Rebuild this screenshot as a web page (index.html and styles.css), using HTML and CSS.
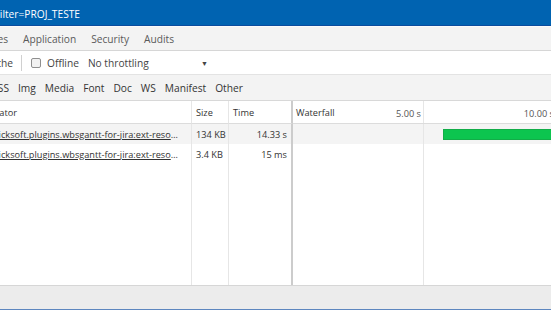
FILE: index.html
```html
<!DOCTYPE html>
<html lang="en">
<head>
  <meta charset="UTF-8">
  <meta name="viewport" content="width=device-width, initial-scale=1.0">
  <title>DevTools - Network</title>
  <link rel="stylesheet" href="styles.css">
</head>
<body>
  <div class="titlebar">
    <div class="cut title-cut"><span>Developer Tools - https://jira.local/secure/WBSGanttView.jspa?Filter=PROJ_TESTE</span></div>
  </div>

  <nav class="tabs">
    <div class="cut tabs-cut">
      <span>Elements</span><span>Console</span><span>Sources</span><span>Network</span><span>Timeline</span><span>Profiles</span>
    </div>
    <span>Application</span>
    <span>Security</span>
    <span>Audits</span>
  </nav>

  <div class="toolbar">
    <div class="cut toolbar-cut">
      <label class="check"><input type="checkbox" checked> Disable cache</label>
    </div>
    <span class="divider"></span>
    <label class="check"><input type="checkbox"> Offline</label>
    <span class="throttle">No throttling <span class="arrow">&#9660;</span></span>
  </div>

  <div class="filters">
    <div class="cut filters-cut">
      <span>All</span><span>XHR</span><span>JS</span><span>CSS</span>
    </div>
    <span>Img</span>
    <span>Media</span>
    <span>Font</span>
    <span>Doc</span>
    <span>WS</span>
    <span>Manifest</span>
    <span>Other</span>
  </div>

  <div class="table">
    <div class="cell head"><div class="cut head-cut"><span>Initiator</span></div></div>
    <div class="cell head">Size</div>
    <div class="cell head time">Time</div>
    <div class="cell head waterfall">
      <div class="seg"><span>Waterfall</span><span class="tick">5.00 s</span></div>
      <div class="seg last"><span></span><span class="tick">10.00 s</span></div>
    </div>

    <div class="cell alt initiator"><a href="#">com.ricksoft.plugins.wbsgantt-for-jira:ext-resources.js</a></div>
    <div class="cell alt">134 KB</div>
    <div class="cell alt time right">14.33 s</div>
    <div class="cell alt waterfall lines"><span class="bar" style="width: 130px"></span></div>

    <div class="cell initiator"><a href="#">com.ricksoft.plugins.wbsgantt-for-jira:ext-resources.css</a></div>
    <div class="cell">3.4 KB</div>
    <div class="cell time right">15 ms</div>
    <div class="cell waterfall lines"></div>

    <div class="cell"></div>
    <div class="cell"></div>
    <div class="cell time"></div>
    <div class="cell waterfall lines"></div>
  </div>

  <div class="statusbar"></div>
</body>
</html>
```

FILE: styles.css
```css
* {
  box-sizing: border-box;
}

body {
  margin: 0;
  width: 551px;
  height: 310px;
  overflow: hidden;
  display: flex;
  flex-direction: column;
  font-family: "Open Sans", "Segoe UI", sans-serif;
  font-size: 10.2px;
  color: #333;
  background-color: #fff;
}

/* text that runs off the left edge of the window */
.cut {
  display: flex;
  justify-content: flex-end;
  white-space: nowrap;
  flex: none;
}

.titlebar {
  flex: none;
  height: 26px;
  display: flex;
  align-items: center;
  padding-top: 2px;
  background-color: #0063b1;
  border-bottom: 1px solid #0b4c9e;
  color: #fff;
}

.title-cut {
  width: 80px;
}

.tabs {
  flex: none;
  height: 25px;
  display: flex;
  align-items: center;
  gap: 15px;
  padding-top: 1px;
  background-color: #f3f3f3;
  border-top: 1px solid #fafafa;
  border-bottom: 1px solid #d6d6d6;
  color: #5a5a5a;
}

.tabs-cut {
  width: 8px;
  gap: 15px;
}

.toolbar {
  flex: none;
  height: 24px;
  display: flex;
  align-items: center;
  padding-top: 1px;
  border-bottom: 1px solid #e3e3e3;
  color: #444;
}

.toolbar-cut {
  width: 13px;
}

.divider {
  width: 1px;
  height: 16px;
  margin: 0 9px 0 8px;
  background-color: #d0d0d0;
}

.check {
  display: flex;
  align-items: center;
  gap: 6px;
  white-space: nowrap;
}

.check input {
  appearance: none;
  width: 10px;
  height: 10px;
  margin: 0;
  border: 1px solid #8f8f8f;
  border-radius: 2px;
  background-color: #f2f2f2;
}

.throttle {
  display: flex;
  align-items: center;
  justify-content: space-between;
  width: 120px;
  margin-left: 9px;
  white-space: nowrap;
}

.arrow {
  font-size: 7px;
  color: #444;
}

.filters {
  flex: none;
  height: 26px;
  display: flex;
  align-items: center;
  gap: 9px;
  padding-top: 1px;
  background-color: #f3f3f3;
  border-bottom: 1px solid #d8d8d8;
  color: #333;
}

.filters-cut {
  width: 9px;
  gap: 9px;
}

.table {
  flex: 1;
  display: grid;
  grid-template-columns: 192px 37px 64px 1fr;
  grid-template-rows: 23px 20px 20px 1fr;
  font-size: 9.2px;
}

.cell {
  display: flex;
  align-items: center;
  padding: 0 4px;
  border-right: 1px solid #e6e6e6;
  white-space: nowrap;
  overflow: hidden;
}

.cell.head {
  border-bottom: 1px solid #dcdcdc;
}

.head-cut {
  width: 17px;
  margin-left: -4px;
}

.cell.alt {
  background-color: #f4f4f4;
}

.cell.time {
  border-right: 2px solid #cccccc;
}

.cell.right {
  justify-content: flex-end;
}

.initiator a {
  display: block;
  width: calc(100% + 26px);
  margin-left: -30px;
  overflow: hidden;
  text-overflow: ellipsis;
  color: #333;
}

.cell.waterfall {
  padding: 0;
  border-right: none;
}

.waterfall.head {
  display: grid;
  grid-template-columns: 131px 131px;
  align-items: stretch;
}

.seg {
  display: flex;
  justify-content: space-between;
  align-items: center;
  padding: 0 2px 0 3px;
  border-right: 1px solid #e6e6e6;
}

.seg.last {
  border-right: none;
  padding-right: 1px;
}

.tick {
  padding-top: 3px;
  color: #555;
}

.waterfall.lines {
  background-image: linear-gradient(#e6e6e6, #e6e6e6);
  background-size: 1px 100%;
  background-position: 130px 0;
  background-repeat: no-repeat;
}

.bar {
  height: 11px;
  margin-left: 150px;
  margin-top: 1px;
  background-color: #0cc54f;
  border: 1px solid #12ad48;
  flex: none;
}

.statusbar {
  flex: none;
  height: 25px;
  background-color: #ececec;
  border-top: 1px solid #d6d6d6;
  border-bottom: 1px solid #5d86bf;
}
```
